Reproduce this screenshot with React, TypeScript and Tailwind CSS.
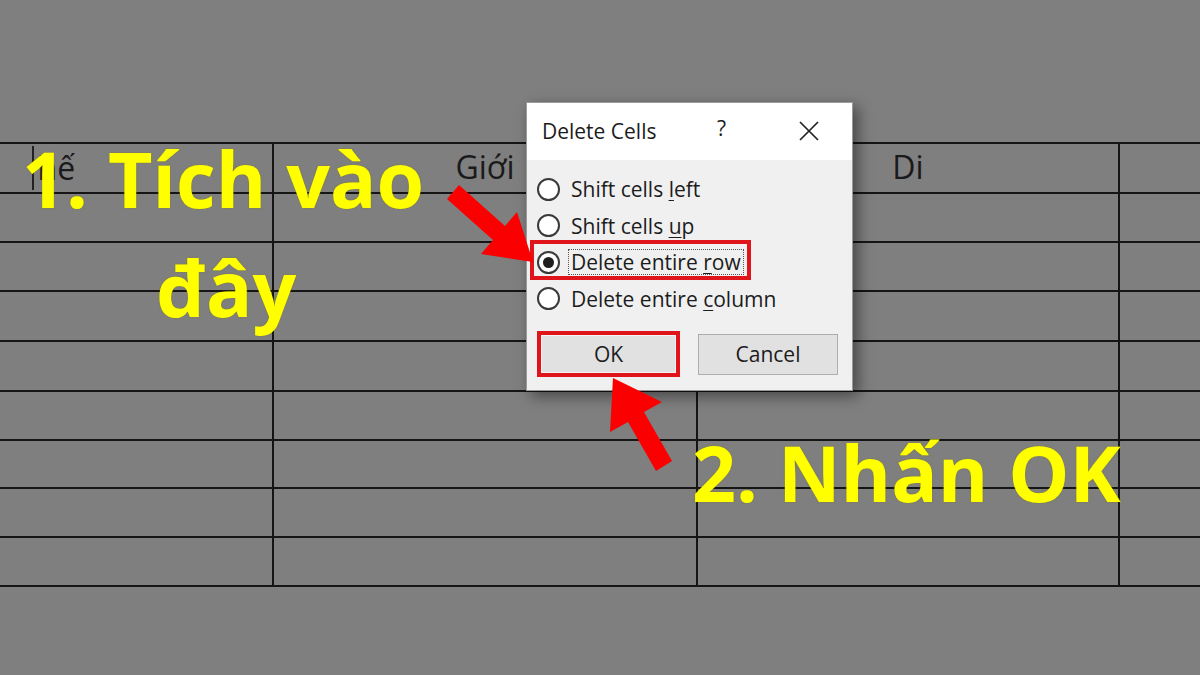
import React from "react";

const rowHeights = ["h-[50px]", "h-[49px]", "h-[49px]", "h-[50px]", "h-[50px]", "h-[49px]", "h-[48px]", "h-[49px]", "h-[49px]"];

function Radio({ checked }: { checked?: boolean }) {
  return (
    <div className="w-[23px] h-[23px] rounded-full border-2 border-[#3a3a3a] bg-white flex items-center justify-center shrink-0">
      {checked && <div className="w-[11px] h-[11px] rounded-full bg-[#1e1e1e]" />}
    </div>
  );
}

function Option({ label, checked }: { label: [string, string, string]; checked?: boolean }) {
  return (
    <div className="h-[36.5px] flex items-center">
      <Radio checked={checked} />
      <span
        className={
          "ml-[8px] px-[2px] leading-[24px] border " +
          (checked ? "border-dotted border-[#555]" : "border-transparent")
        }
      >
        {label[0]}
        <span className="underline underline-offset-[3px] decoration-1">{label[1]}</span>
        {label[2]}
      </span>
    </div>
  );
}

export default function App() {
  return (
    <div
      className="relative w-[1200px] h-[675px] overflow-hidden bg-[#7f7f7f]"
      style={{ fontFamily: '"Open Sans", "Noto Sans", sans-serif' }}
    >
      {/* spreadsheet grid */}
      <div className="pt-[142px]">
        <div className="border-t-2 border-[#151515]">
          {rowHeights.map((h, i) => (
            <div key={i} className={"grid grid-cols-[274px_424px_422px_1fr] " + h}>
              <div className="border-b-2 border-r-2 border-[#151515] flex items-center pl-[32px] text-[32px] text-[#1a1a1a]">
                {i === 0 && (
                  <>
                    <span className="w-[1.5px] h-[44px] bg-[#222] mr-[4px]" />
                    <span className="leading-none">hế</span>
                  </>
                )}
              </div>
              <div className="border-b-2 border-r-2 border-[#151515] flex items-center justify-center text-[32px] text-[#1a1a1a]">
                {i === 0 && <span className="leading-none pb-[2px]">Giới</span>}
              </div>
              <div className="border-b-2 border-r-2 border-[#151515] flex items-center justify-center text-[32px] text-[#1a1a1a]">
                {i === 0 && <span className="leading-none pb-[2px]">Di</span>}
              </div>
              <div className="border-b-2 border-[#151515]" />
            </div>
          ))}
        </div>
      </div>

      {/* yellow annotations */}
      <div className="absolute left-[22px] top-[140px] text-[77px] leading-none font-bold text-[#ffff00] whitespace-nowrap [text-shadow:0_0_2px_rgba(120,120,0,0.6)]">
        1. Tích vào
      </div>
      <div className="absolute left-[156px] top-[249px] text-[77px] leading-none font-bold text-[#ffff00] whitespace-nowrap [text-shadow:0_0_2px_rgba(120,120,0,0.6)]">
        đây
      </div>
      <div className="absolute left-[692px] top-[434px] text-[77px] leading-none font-bold text-[#ffff00] whitespace-nowrap [text-shadow:0_0_2px_rgba(120,120,0,0.6)]">
        2. Nhấn OK
      </div>

      {/* dialog */}
      <div className="absolute left-[526px] top-[102px] w-[327px] h-[289px] bg-[#f0f0f0] border border-[#9a9a9a] shadow-[5px_5px_14px_rgba(0,0,0,0.45)] text-[21px] font-medium text-[#1c1c1c]">
        <div className="relative h-[57px] bg-white flex items-center pl-[15px]">
          <span className="leading-none">Delete Cells</span>
          <span className="absolute left-[190px] top-[15px] leading-none">?</span>
          <svg className="absolute left-[272px] top-[18px]" width="20" height="20" viewBox="0 0 20 20">
            <path d="M1 1 L19 19 M19 1 L1 19" stroke="#222" strokeWidth="1.7" fill="none" />
          </svg>
        </div>
        <div className="relative pt-[11px] pl-[10px]">
          <Option label={["Shift cells ", "l", "eft"]} />
          <Option label={["Shift cells ", "u", "p"]} />
          <Option label={["Delete entire ", "r", "ow"]} checked />
          <Option label={["Delete entire ", "c", "olumn"]} />
          <div className="absolute left-[3px] top-[80px] w-[221px] h-[40px] border-[4px] border-[#e0141b]" />
          <div className="flex items-start mt-[17px] pl-[4px] gap-[22px]">
            <button className="w-[135px] h-[38px] mt-[1px] bg-[#e1e1e1] border border-[#f4f4f4] ring-4 ring-[#e0141b] leading-none">
              OK
            </button>
            <button className="w-[140px] h-[41px] bg-[#e1e1e1] border border-[#adadad] leading-none">
              Cancel
            </button>
          </div>
        </div>
      </div>

      {/* red arrows */}
      <svg className="absolute inset-0 pointer-events-none" width="1200" height="675" viewBox="0 0 1200 675">
        <polygon points="447,199 459,185 505,226 517,212 533,262 481,254 493,240" fill="#fb0000" />
        <polygon points="613,378 662,402 644,412 672,461 656,471 628,422 610,432" fill="#fb0000" />
      </svg>
    </div>
  );
}
